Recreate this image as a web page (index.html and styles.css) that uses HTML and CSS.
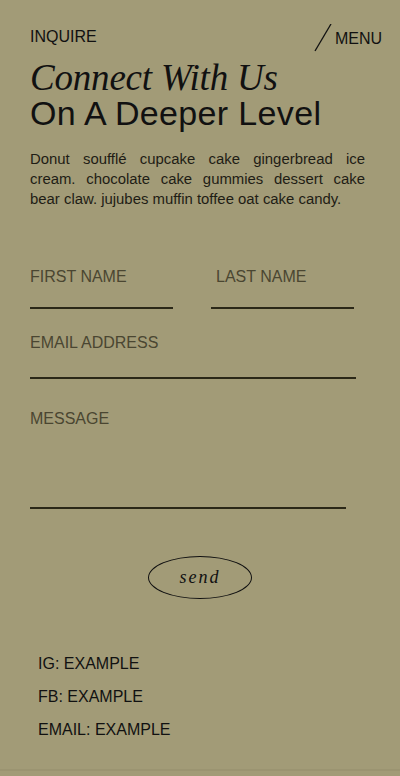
FILE: index.html
```html
<!DOCTYPE html>
<html lang="en">
<head>
    <meta charset="UTF-8">
    <meta name="viewport" content="width=device-width, initial-scale=1.0">
    <title>Inquire</title>
    <link rel="stylesheet" href="styles.css">
</head>
<body>
    <div class="page">
        <header class="top-bar">
            <a href="#" class="inquire">INQUIRE</a>
            <a href="#" class="menu">
                <svg class="slash" width="18" height="28" viewBox="0 0 18 28">
                    <line x1="1" y1="27" x2="17" y2="0" stroke="#111" stroke-width="1.3"/>
                </svg>
                <span>MENU</span>
            </a>
        </header>

        <h1 class="title">
            <span class="title-script">Connect With Us</span>
            <span class="title-sans">On A Deeper Level</span>
        </h1>

        <p class="intro">Donut soufflé cupcake cake gingerbread ice cream. chocolate cake gummies dessert cake bear claw. jujubes muffin toffee oat cake candy.</p>

        <form class="contact-form">
            <div class="name-row">
                <input type="text" class="field field-first" placeholder="FIRST NAME">
                <input type="text" class="field field-last" placeholder="LAST NAME">
            </div>
            <input type="email" class="field field-email" placeholder="EMAIL ADDRESS">
            <textarea class="field field-message" placeholder="MESSAGE"></textarea>
            <button type="submit" class="send-btn">send</button>
        </form>

        <!-- 연락처 -->
        <ul class="socials">
            <li>IG: EXAMPLE</li>
            <li>FB: EXAMPLE</li>
            <li>EMAIL: EXAMPLE</li>
        </ul>

        <div class="bottom-line"></div>
    </div>
</body>
</html>
```

FILE: styles.css
```css
* {
    margin: 0;
    padding: 0;
    box-sizing: border-box;
}

html, body {
    background-color: #a29b77;
}

body {
    font-family: 'Liberation Sans', Arial, sans-serif;
    color: #111;
}

.page {
    padding: 27px 0 0 30px;
    min-height: 776px;
}

/* 상단바 */
.top-bar {
    display: flex;
    justify-content: space-between;
    align-items: flex-start;
    padding-right: 18px;
    height: 20px;
}

.top-bar a {
    color: #111;
    text-decoration: none;
    font-size: 16px;
    line-height: 20px;
}

.menu {
    display: flex;
    align-items: flex-start;
    margin-top: 2px;
}

.slash {
    margin: -5px 3px 0 0;
}

.title {
    margin-top: 13px;
    font-weight: normal;
}

.title-script {
    display: block;
    font-family: 'Liberation Serif', 'Times New Roman', serif;
    font-style: italic;
    font-size: 37px;
    line-height: 36px;
    letter-spacing: -0.2px;
}

.title-sans {
    display: block;
    font-size: 34px;
    line-height: 36px;
    letter-spacing: 0.35px;
    margin-top: -1px;
}

.intro {
    margin-top: 18px;
    width: 335px;
    font-size: 14.9px;
    line-height: 20px;
    text-align: justify;
    color: #1f1d15;
}

/* 폼 */
.contact-form {
    margin-top: 50px;
}

.field {
    display: block;
    border: none;
    border-bottom: 2px solid #2b2818;
    background: transparent;
    font-family: inherit;
    font-size: 16px;
    line-height: 20px;
    color: #2b2818;
    outline: none;
    border-radius: 0;
}

.field::placeholder {
    color: #4a4631;
    opacity: 1;
}

.name-row {
    display: flex;
    gap: 38px;
}

.field-first, .field-last {
    width: 143px;
    height: 50px;
    padding: 8px 0 20px;
}

.field-last {
    padding-left: 5px;
}

.field-email {
    width: 326px;
    height: 54px;
    margin-top: 16px;
    padding: 8px 0 24px;
}

.field-message {
    width: 316px;
    height: 108px;
    margin-top: 22px;
    padding: 8px 0 0;
    resize: none;
}

.send-btn {
    display: block;
    width: 104px;
    height: 43px;
    margin: 47px 0 0 118px;
    border: 1.4px solid #111;
    border-radius: 50%;
    background: transparent;
    font-family: 'Liberation Serif', 'Times New Roman', serif;
    font-style: italic;
    font-size: 18px;
    letter-spacing: 2px;
    color: #111;
    cursor: pointer;
}

/* 연락처 */
.socials {
    list-style: none;
    margin: 48px 0 0 8px;
}

.socials li {
    font-size: 16px;
    line-height: 33px;
}

.bottom-line {
    height: 2px;
    margin: 23px 0 0 -30px;
    background-color: #9b9471;
}
```
